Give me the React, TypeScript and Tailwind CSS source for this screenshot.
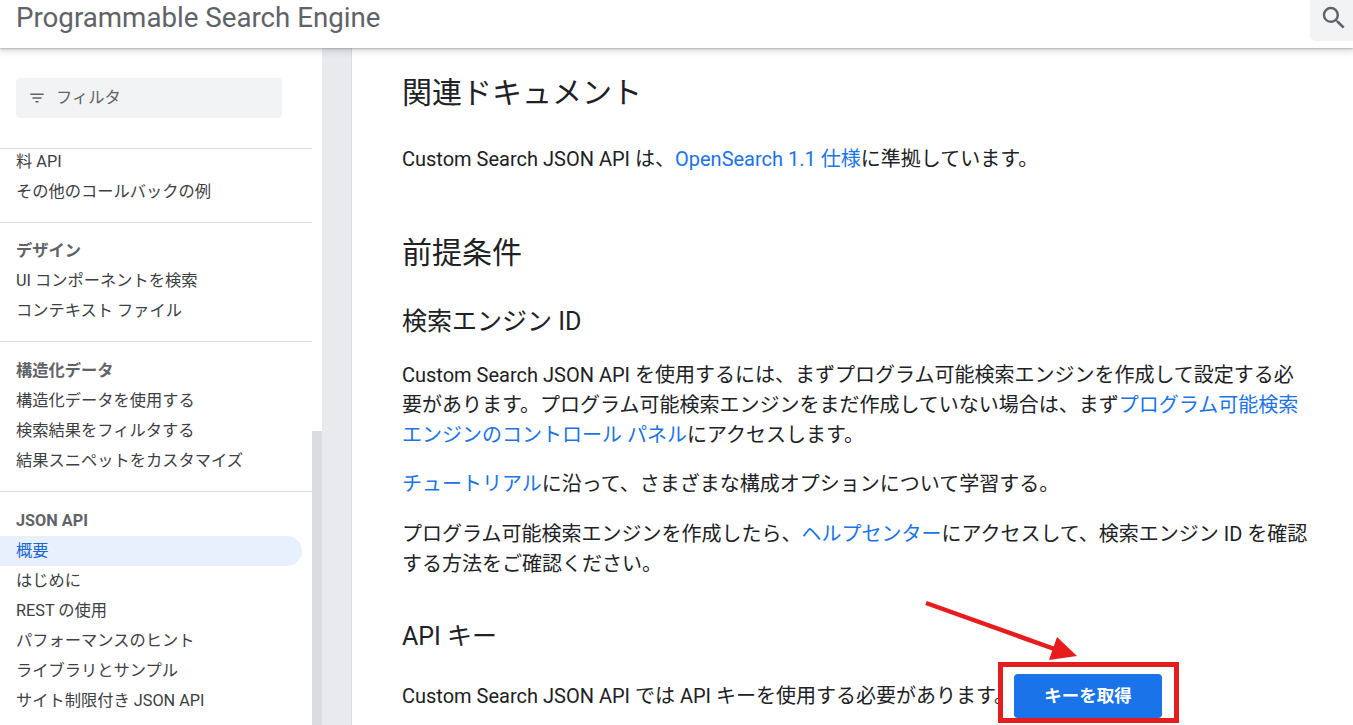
const font = "font-['Roboto','Noto_Sans_CJK_JP',sans-serif]";

const sections = [
  { title: '', gap: '', items: ['料 API', 'その他のコールバックの例'] },
  { title: 'デザイン', gap: 'mt-[13px]', items: ['UI コンポーネントを検索', 'コンテキスト ファイル'] },
  { title: '構造化データ', gap: 'mt-[14px]', items: ['構造化データを使用する', '検索結果をフィルタする', '結果スニペットをカスタマイズ'] },
  {
    title: 'JSON API',
    gap: 'mt-[14px]',
    items: ['概要', 'はじめに', 'REST の使用', 'パフォーマンスのヒント', 'ライブラリとサンプル', 'サイト制限付き JSON API'],
  },
];

function Sidebar() {
  return (
    <aside className="w-[312px] shrink-0 overflow-hidden pt-[30px]">
      <div className="ml-4 flex h-10 w-[266px] items-center rounded bg-[#f1f3f4] pl-3 text-[#5f6368]">
        <svg className="mr-[10px] h-[18px] w-[18px]" viewBox="0 0 24 24" fill="currentColor">
          <path d="M10 18h4v-2h-4v2zM3 6v2h18V6H3zm3 7h12v-2H6v2z" />
        </svg>
        <span className="text-[16.25px]">フィルタ</span>
      </div>
      <div className="mt-[30px]">
        {sections.map((s) => (
          <div key={s.items[0]} className="border-t border-[#dadce0] pb-[15px]">
            {s.title ? (
              <div className={`${s.gap} h-[30px] px-4 text-[16.25px] leading-[30px] font-bold text-[#5f6368]`}>{s.title}</div>
            ) : null}
            <ul className={s.title ? '' : 'mt-[-2px]'}>
              {s.items.map((item) =>
                item === '概要' ? (
                  <li
                    key={item}
                    className="mr-[10px] h-[30px] rounded-r-[15px] bg-[#e8f0fe] px-4 text-[16.25px] leading-[30px] text-[#1967d2]"
                  >
                    {item}
                  </li>
                ) : (
                  <li key={item} className="h-[30px] px-4 text-[16.25px] leading-[30px] text-[#3c4043]">
                    {item}
                  </li>
                ),
              )}
            </ul>
          </div>
        ))}
      </div>
    </aside>
  );
}

function Lnk({ children }: { children: React.ReactNode }) {
  return <a className="text-[#1a73e8]">{children}</a>;
}

export default function App() {
  return (
    <div className={`relative flex h-[725px] w-[1353px] flex-col overflow-hidden bg-white ${font}`}>
      <header className="relative z-10 flex h-12 shrink-0 items-start justify-between bg-white shadow-[0_1px_2px_0_rgba(60,64,67,0.3),0_2px_6px_2px_rgba(60,64,67,0.15)]">
        <div className="mt-[-1px] ml-4 text-[27.7px] leading-[38px] text-[#5f6368]">Programmable Search Engine</div>
        <div className="flex h-[41px] w-[43px] items-start rounded-bl-md bg-[#f1f3f4] pt-[3px] pl-[9px] text-[#5f6368]">
          <svg className="h-[30px] w-[30px]" viewBox="0 0 24 24" fill="currentColor">
            <path d="M15.5 14h-.79l-.28-.27A6.471 6.471 0 0 0 16 9.5 6.5 6.5 0 1 0 9.5 16c1.61 0 3.09-.59 4.23-1.57l.27.28v.79l5 4.99L20.49 19l-4.99-5zm-6 0C7.01 14 5 11.99 5 9.5S7.01 5 9.5 5 14 7.01 14 9.5 11.99 14 9.5 14z" />
          </svg>
        </div>
      </header>

      <div className="flex min-h-0 flex-1">
        <Sidebar />
        <div className="flex w-[10px] shrink-0 flex-col">
          <div className="h-[383px] shrink-0" />
          <div className="flex-1 bg-[#dadce0]" />
        </div>
        <div className="w-[30px] shrink-0 border-r border-[#dadce0] bg-[#e8eaed]" />

        <main className="min-w-0 flex-1 pt-[25px] pr-[43px] pl-[50px] text-[20px] leading-[30px] text-[#202124]">
          <h2 className="text-[30px] leading-[40px]">関連ドキュメント</h2>
          <p className="mt-[31px]">
            Custom Search JSON API は、<Lnk>OpenSearch 1.1 仕様</Lnk>に準拠しています。
          </p>
          <h2 className="mt-[59px] text-[30px] leading-[40px]">前提条件</h2>
          <h3 className="mt-[29px] text-[25px] leading-[40px]">検索エンジン ID</h3>
          <p className="mt-[18px]">
            Custom Search JSON API を使用するには、まずプログラム可能検索エンジンを作成して設定する必要があります。プログラム可能検索エンジンをまだ作成していない場合は、まず
            <Lnk>プログラム可能検索エンジンのコントロール パネル</Lnk>にアクセスします。
          </p>
          <p className="mt-[19px]">
            <Lnk>チュートリアル</Lnk>に沿って、さまざまな構成オプションについて学習する。
          </p>
          <p className="mt-[20px]">
            プログラム可能検索エンジンを作成したら、<Lnk>ヘルプセンター</Lnk>にアクセスして、検索エンジン ID を確認する方法をご確認ください。
          </p>
          <h3 className="mt-[38px] text-[25px] leading-[40px]">API キー</h3>
          <p className="mt-[24px] whitespace-nowrap">Custom Search JSON API では API キーを使用する必要があります。</p>
        </main>
      </div>

      {/* annotation over the page */}
      <div className="absolute top-[674px] left-[1014px] flex h-[44px] w-[148px] items-center justify-center rounded bg-[#1a73e8] text-[17.5px] font-bold text-white">
        キーを取得
      </div>
      <div className="absolute top-[662px] left-[998px] h-[61px] w-[181px] border-[5px] border-[#e71c1c]" />
      <svg className="absolute top-[595px] left-[920px]" width="170" height="70" viewBox="0 0 170 70">
        <line x1="6" y1="8" x2="140" y2="56" stroke="#e71c1c" strokeWidth="4.5" />
        <polygon points="137,42 157,61 129,65" fill="#e71c1c" />
      </svg>
    </div>
  );
}
